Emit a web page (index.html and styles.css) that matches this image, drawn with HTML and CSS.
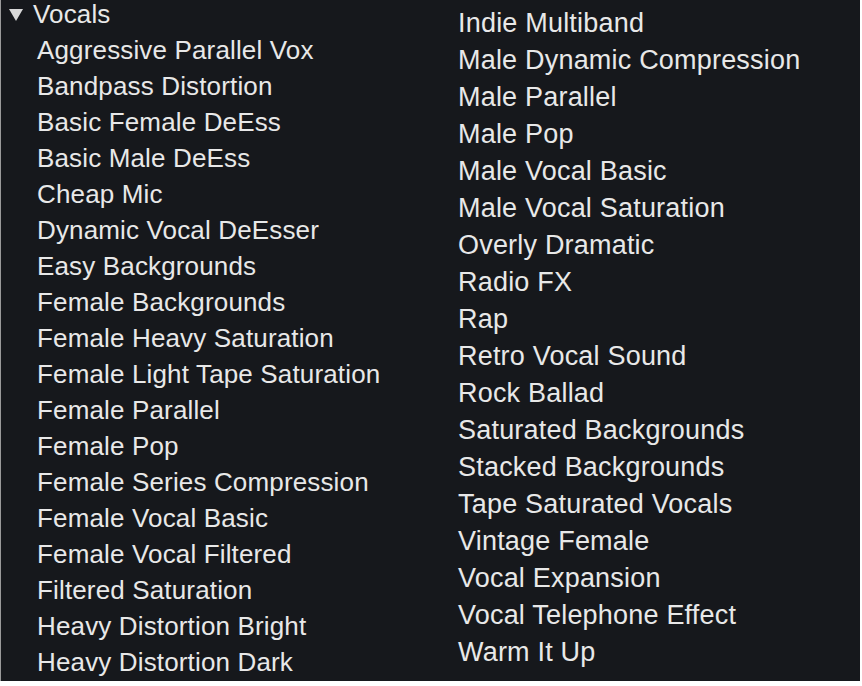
FILE: index.html
```html
<!DOCTYPE html>
<html lang="en">
<head>
    <meta charset="UTF-8">
    <title>Vocal Presets</title>
    <link rel="stylesheet" href="styles.css">
</head>
<body>
    <div class="browser">
        <div class="column left">
            <div class="folder">
                <svg class="arrow" width="14" height="13" viewBox="0 0 14 13"><polygon points="0,1 14,1 7,13" fill="#d8d8d8"/></svg>
                <span>Vocals</span>
            </div>
            <ul class="presets">
                <li>Aggressive Parallel Vox</li>
                <li>Bandpass Distortion</li>
                <li>Basic Female DeEss</li>
                <li>Basic Male DeEss</li>
                <li>Cheap Mic</li>
                <li>Dynamic Vocal DeEsser</li>
                <li>Easy Backgrounds</li>
                <li>Female Backgrounds</li>
                <li>Female Heavy Saturation</li>
                <li>Female Light Tape Saturation</li>
                <li>Female Parallel</li>
                <li>Female Pop</li>
                <li>Female Series Compression</li>
                <li>Female Vocal Basic</li>
                <li>Female Vocal Filtered</li>
                <li>Filtered Saturation</li>
                <li>Heavy Distortion Bright</li>
                <li>Heavy Distortion Dark</li>
            </ul>
        </div>
        <div class="column right">
            <ul class="presets">
                <li>Indie Multiband</li>
                <li>Male Dynamic Compression</li>
                <li>Male Parallel</li>
                <li>Male Pop</li>
                <li>Male Vocal Basic</li>
                <li>Male Vocal Saturation</li>
                <li>Overly Dramatic</li>
                <li>Radio FX</li>
                <li>Rap</li>
                <li>Retro Vocal Sound</li>
                <li>Rock Ballad</li>
                <li>Saturated Backgrounds</li>
                <li>Stacked Backgrounds</li>
                <li>Tape Saturated Vocals</li>
                <li>Vintage Female</li>
                <li>Vocal Expansion</li>
                <li>Vocal Telephone Effect</li>
                <li>Warm It Up</li>
            </ul>
        </div>
    </div>
</body>
</html>
```

FILE: styles.css
```css
/* Preset browser */
body {
    margin: 0;
    padding: 0;
    background-color: #fff;
    font-family: "Liberation Sans", Arial, sans-serif;
}

.browser {
    display: flex;
    width: 859px;
    height: 681px;
    overflow: hidden;
    background-color: #16181c;
    border-left: 1px solid #9a9a9a;
    color: #e8e8e8;
}

.column {
    display: flex;
    flex-direction: column;
}

.left {
    width: 457px;
    margin-top: -4px;
    font-size: 26px;
    letter-spacing: 0.15px;
}

.right {
    padding-top: 5px;
    font-size: 27px;
    letter-spacing: 0.2px;
}

.folder {
    display: flex;
    align-items: center;
    gap: 10px;
    height: 36px;
    padding-left: 8px;
}

.presets {
    list-style: none;
    margin: 0;
    padding: 0;
}

.left .presets li {
    height: 36px;
    line-height: 36px;
    padding-left: 36px;
    white-space: nowrap;
}

.right .presets li {
    height: 37px;
    line-height: 37px;
    white-space: nowrap;
}
```
